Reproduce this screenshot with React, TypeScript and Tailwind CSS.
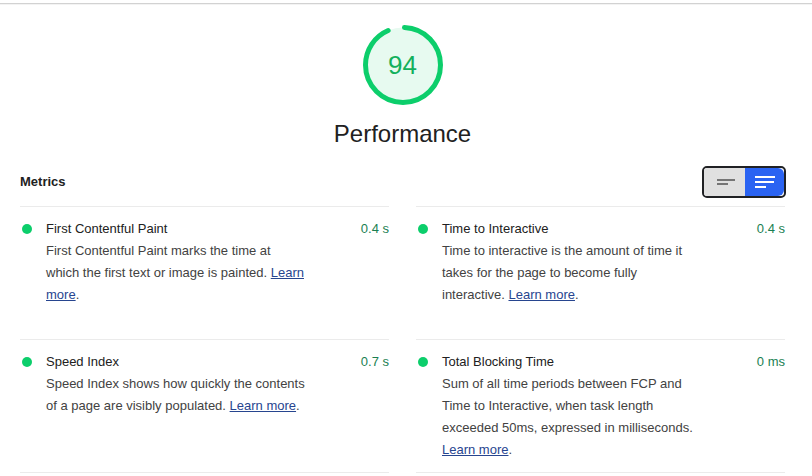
import React from 'react';

type Metric = {
  title: string;
  value: string;
  body: React.ReactNode;
};

const Learn = ({ children }: { children: React.ReactNode }) => (
  <a href="#" className="text-[#27458f] underline">
    {children}
  </a>
);

// line breaks follow the reference, the fallback font measures a little narrower
const metrics: Metric[] = [
  {
    title: 'First Contentful Paint',
    value: '0.4 s',
    body: (
      <>
        First Contentful Paint marks the time at
        <br />
        which the first text or image is painted.{' '}
        <Learn>
          Learn
          <br />
          more
        </Learn>
        .
      </>
    ),
  },
  {
    title: 'Time to Interactive',
    value: '0.4 s',
    body: (
      <>
        Time to interactive is the amount of time it
        <br />
        takes for the page to become fully
        <br />
        interactive. <Learn>Learn more</Learn>.
      </>
    ),
  },
  {
    title: 'Speed Index',
    value: '0.7 s',
    body: (
      <>
        Speed Index shows how quickly the contents
        <br />
        of a page are visibly populated. <Learn>Learn more</Learn>.
      </>
    ),
  },
  {
    title: 'Total Blocking Time',
    value: '0 ms',
    body: (
      <>
        Sum of all time periods between FCP and
        <br />
        Time to Interactive, when task length
        <br />
        exceeded 50ms, expressed in milliseconds.
        <br />
        <Learn>Learn more</Learn>.
      </>
    ),
  },
];

const Gauge = ({ score }: { score: number }) => {
  const r = 37.5;
  const c = 2 * Math.PI * r;
  return (
    <div className="relative w-[80px] h-[80px]">
      <svg viewBox="0 0 80 80" className="w-[80px] h-[80px] -rotate-90">
        <circle cx="40" cy="40" r={r} fill="#e7faf0" />
        <circle
          cx="40"
          cy="40"
          r={r}
          fill="none"
          stroke="#0cce6b"
          strokeWidth="5"
          strokeLinecap="round"
          strokeDasharray={`${(score / 100) * c - 3} ${c}`}
          strokeDashoffset="-1.5"
        />
      </svg>
      <div className="absolute inset-0 flex items-center justify-center text-[26px] leading-none text-[#13b05c]">
        {score}
      </div>
    </div>
  );
};

const ViewToggle = () => (
  <div className="flex w-[84px] h-[32px] -mr-[1px] border-2 border-[#202124] rounded-[5px] overflow-hidden bg-white">
    <div className="w-[41px] bg-[#e0e0e0] flex items-center justify-center">
      <svg width="20" height="12" viewBox="0 0 20 12">
        <rect x="2" y="3" width="18" height="2" fill="#757575" />
        <rect x="2" y="7" width="11" height="2" fill="#757575" />
      </svg>
    </div>
    <div className="flex-1 bg-[#2a63f2] rounded-r-[6px] flex items-center justify-center">
      <svg width="22" height="14" viewBox="0 0 22 14">
        <rect x="1" y="1" width="20" height="2" fill="#fff" />
        <rect x="1" y="6" width="19" height="2" fill="#fff" />
        <rect x="1" y="11" width="11" height="2" fill="#fff" />
      </svg>
    </div>
  </div>
);

const MetricCell = ({ m }: { m: Metric }) => (
  <div className="border-t border-[#ebebeb] pt-[11px] pb-[11px] text-[13px] leading-[22px]">
    <div className="flex items-center">
      <span className="ml-[2px] mr-[14px] w-[10px] h-[10px] rounded-full bg-[#0cce6b] shrink-0" />
      <span className="flex-1 text-[#212121]">{m.title}</span>
      <span className="text-[#1a7f52]">{m.value}</span>
    </div>
    <p className="ml-[26px] whitespace-nowrap text-[#424242]">{m.body}</p>
  </div>
);

export default function App() {
  return (
    <div className="w-[812px] h-[476px] overflow-hidden bg-white font-['Liberation_Sans',Arial,sans-serif]">
      <div className="pt-[3px]">
        <div className="h-px bg-[#d2d2d2]" />
        <div className="h-px bg-[#f3f3f3]" />
      </div>
      <div className="ml-[20px] w-[765px]">
        <div className="flex flex-col items-center pt-[20px]">
          <Gauge score={94} />
          <div className="mt-[15px] text-[24px] leading-[28px] text-[#212121]">Performance</div>
        </div>
        <div className="mt-[18px] flex items-center justify-between h-[32px]">
          <h2 className="text-[13px] font-bold text-[#212121]">Metrics</h2>
          <ViewToggle />
        </div>
        <div className="mt-[8px] grid grid-cols-[369px_369px] gap-x-[27px] auto-rows-fr">
          {metrics.map((m) => (
            <MetricCell key={m.title} m={m} />
          ))}
          <div className="border-t border-[#ebebeb]" />
          <div className="border-t border-[#ebebeb]" />
        </div>
      </div>
    </div>
  );
}
